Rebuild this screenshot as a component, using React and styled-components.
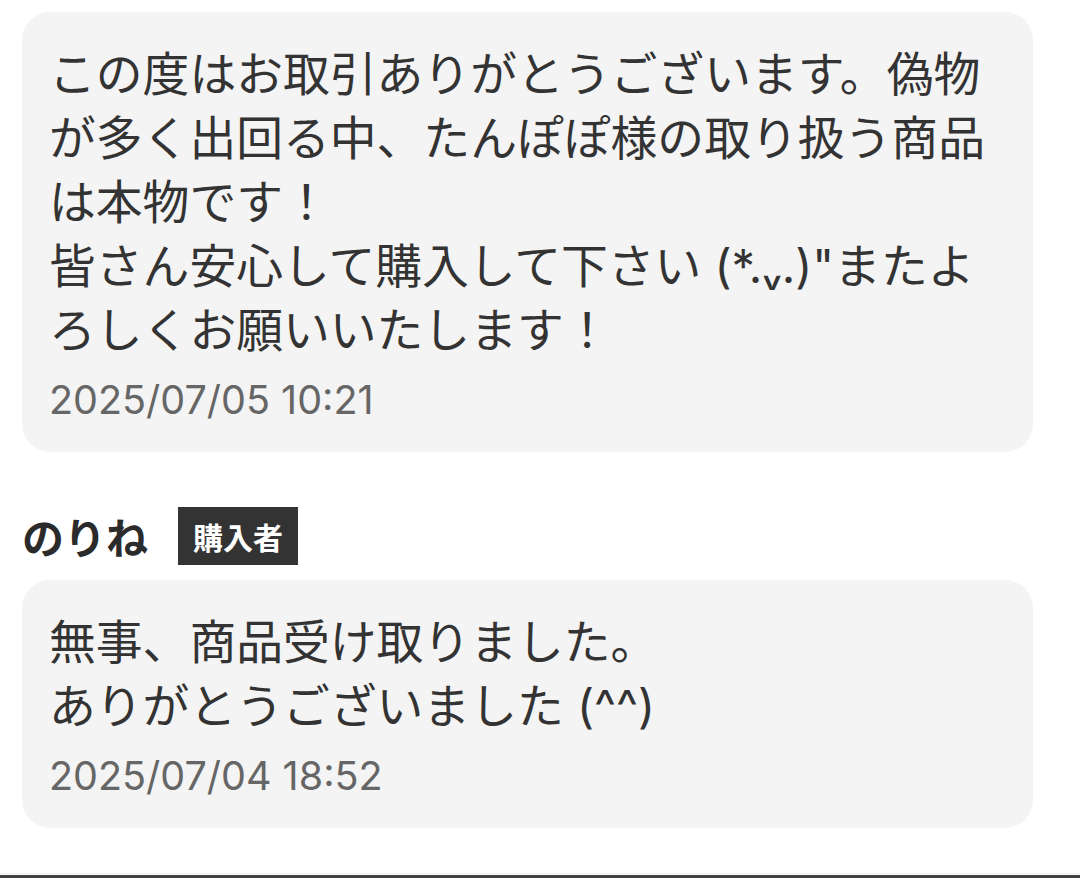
import styled, { createGlobalStyle } from "styled-components";

const GlobalStyle = createGlobalStyle`
  html, body {
    margin: 0;
    background: #ffffff;
  }
  body {
    font-family: "Inter", "Noto Sans CJK JP", sans-serif;
    color: #333333;
  }
`;

const Page = styled.div`
  display: flex;
  flex-direction: column;
  padding: 12px 47px 0 22px;
`;

const Bubble = styled.div`
  display: flex;
  flex-direction: column;
  gap: 14px;
  background: #f4f4f4;
  border-radius: 28px;
  padding: 30px 26px 28px 27px;
`;

const Body = styled.p`
  margin: 0;
  font-size: 46.8px;
  line-height: 64px;
  color: #333333;
  word-break: break-all;
`;

const Time = styled.span`
  font-size: 39.5px;
  line-height: 48px;
  color: #666666;
`;

const Author = styled.div`
  display: flex;
  align-items: center;
  gap: 30px;
  margin: 55px 0 15px;
`;

const Name = styled.span`
  font-family: "Noto Sans CJK JP", sans-serif;
  font-size: 42px;
  font-weight: 700;
  color: #2b2b2b;
  line-height: 58px;
`;

const Badge = styled.span`
  display: flex;
  align-items: center;
  justify-content: center;
  height: 58px;
  width: 120px;
  background: #333333;
  color: #ffffff;
  font-family: "Noto Sans CJK JP", sans-serif;
  font-size: 30px;
  font-weight: 700;
`;

const Divider = styled.div`
  margin-top: 45px;
  margin-left: -22px;
  margin-right: -47px;
  border-top: 1px solid #ececec;
  height: 4px;
  background: linear-gradient(#ffffff 0 1px, #424242 1px);
`;

export default function App() {
  return (
    <>
      <GlobalStyle />
      <Page>
        <Bubble>
          <Body>
            この度はお取引ありがとうございます。偽物が多く出回る中、たんぽぽ様の取り扱う商品は本物です！
            <br />
            皆さん安心して購入して下さい (*.ᵥ.)"またよろしくお願いいたします！
          </Body>
          <Time>2025/07/05 10:21</Time>
        </Bubble>
        <Author>
          <Name>のりね</Name>
          <Badge>購入者</Badge>
        </Author>
        <Bubble>
          <Body>
            無事、商品受け取りました。
            <br />
            ありがとうございました (^^)
          </Body>
          <Time>2025/07/04 18:52</Time>
        </Bubble>
        <Divider />
      </Page>
    </>
  );
}
